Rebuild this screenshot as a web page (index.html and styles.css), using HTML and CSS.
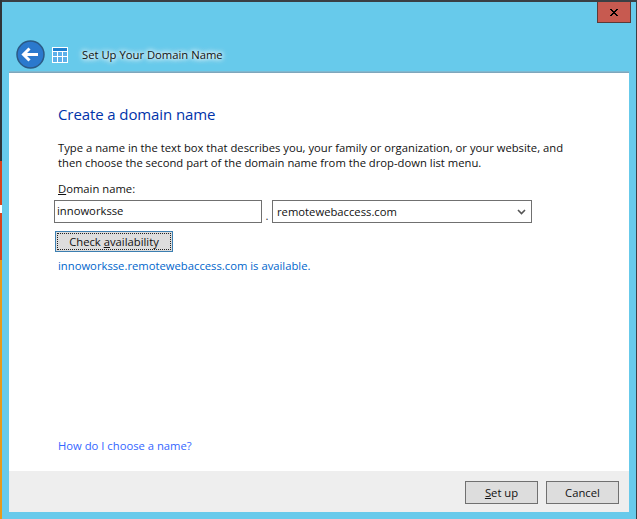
FILE: index.html
```html
<!DOCTYPE html>
<html lang="en">
<head>
<meta charset="utf-8">
<title>Set Up Your Domain Name</title>
<link rel="stylesheet" href="styles.css">
</head>
<body>
<div class="window">
  <div class="edge-left"></div>
  <div class="frame">
    <div class="titlebar">
      <button class="close" aria-label="Close"><svg width="10" height="9" viewBox="0 0 10 9"><path d="M1 1h2v1h1v1h2V2h1V1h2v1H8v1H7v1H6v1h1v1h1v1h1v1H7V7H6V6H4v1H3v1H1V7h1V6h1V5h1V4H3V3H2V2H1z" fill="#000"/></svg></button>
    </div>
    <div class="navbar">
      <svg class="back" width="30" height="30" viewBox="0 0 30 30"><circle cx="14.5" cy="14.5" r="13.5" fill="#2b79cd" stroke="#2b5a85" stroke-width="1.5"/><path d="M7 14.5h15M13.5 8.5l-6 6 6 6" fill="none" stroke="#fff" stroke-width="3"/></svg>
      <svg class="app-icon" width="16" height="16" viewBox="0 0 16 16"><rect x=".5" y=".5" width="15" height="15" fill="#fff" stroke="#fff"/><rect x="1" y="1" width="14" height="3" fill="#1f7fd0"/><path d="M1 5h14v10H1z" fill="#5eb0ea"/><path d="M5.5 5v10M10.5 5v10M1 9.5h14" stroke="#fff" fill="none"/></svg>
      <span class="nav-title">Set Up Your Domain Name</span>
    </div>
    <main class="panel">
      <div class="content">
        <h1 class="heading">Create a domain name</h1>
        <p class="intro">Type a name in the text box that describes you, your family or organization, or your website, and<br>then choose the second part of the domain name from the drop-down list menu.</p>
        <label class="field-label"><u>D</u>omain name:</label>
        <div class="field-row">
          <div class="textbox">innoworksse</div>
          <span class="dot">.</span>
          <div class="select"><span>remotewebaccess.com</span><svg width="9" height="6" viewBox="0 0 9 6"><path d="M1 1l3.5 3.5L8 1" fill="none" stroke="#555" stroke-width="1.6"/></svg></div>
        </div>
        <button class="btn check"><span class="focus-ring"><span>Check <u>a</u>vailability</span></span></button>
        <p class="status">innoworksse.remotewebaccess.com is available.</p>
        <a class="help">How do I choose a name?</a>
      </div>
      <div class="footer">
        <button class="btn action"><u>S</u>et up</button>
        <button class="btn action">Cancel</button>
      </div>
    </main>
  </div>
</div>
</body>
</html>
```
FILE: styles.css
```css
* { box-sizing: border-box; }
html, body { margin: 0; height: 100%; }
body { font-family: "Open Sans", "Noto Sans", sans-serif; font-size: 11.25px; color: #111; background: #67caeb; overflow: hidden; }
.window { width: 637px; height: 519px; display: flex; }
.edge-left { width: 2px; background: linear-gradient(#2f3438 0 161px, #d8431c 161px 205px, #fff 205px 213px, #d8431c 213px 260px, #e89a1a 260px 100%); }
.frame { flex: 1; display: flex; flex-direction: column; background: #67caeb; border-top: 2px solid #3a3f44; border-right: 1px solid #3a3f44; }
.titlebar { height: 37px; display: flex; justify-content: flex-end; padding-right: 5px; flex: none; }
.close { width: 34px; height: 21px; margin: 0; padding: 0; background: #c75a50; border: 1px solid #5b3a38; border-top: 0; display: flex; align-items: center; justify-content: center; }
.navbar { height: 33px; display: flex; align-items: center; flex: none; padding: 0 0 2px 14px; }
.back { flex: none; }
.app-icon { flex: none; margin-left: 6px; }
.nav-title { margin-left: 14px; text-shadow: 0 0 6px #fff, 0 0 6px #fff, 0 0 4px #fff; color: #111; }
.panel { margin: 0 7px 7px 7px; flex: 1; background: #fff; border-top: 1px solid #7fa6bc; display: flex; flex-direction: column; box-shadow: 0 -1px 0 #7fb8d0; }
.content { flex: 1; padding: 0 0 0 49px; display: flex; flex-direction: column; align-items: flex-start; }
.heading { margin: 31px 0 0; font-size: 15px; font-weight: 400; line-height: 20px; color: #0033aa; letter-spacing: -0.1px; }
.intro { margin: 16px 0 0 0; line-height: 15px; }
.field-label { margin-top: 11px; line-height: 15px; }
.field-row { display: flex; align-items: flex-end; margin: 4px 0 0 -4px; }
.textbox { width: 208px; height: 23px; border: 1px solid #707070; padding: 0 2px; line-height: 20px; }
.dot { width: 10px; text-align: center; line-height: 14px; color: #333; }
.select { width: 260px; height: 23px; border: 1px solid #707070; padding: 0 5px 0 4px; display: flex; justify-content: space-between; align-items: center; }
.btn { font: inherit; color: #111; background: #dddddd; border: 1px solid #707070; padding: 0; margin: 0; }
.check { width: 118px; height: 21px; margin: 8px 0 0 -3px; border-color: #3c7fb1; padding: 1px; }
.focus-ring { display: flex; height: 100%; align-items: center; justify-content: center; border: 1px dotted #222; }
.status { margin: 6px 0 0; line-height: 15px; color: #0066cc; }
.help { margin-top: auto; margin-bottom: 18px; line-height: 15px; color: #3366ff; }
.footer { height: 41px; background: #eeeeee; display: flex; justify-content: flex-end; align-items: flex-start; gap: 8px; padding: 10px 10px 0 0; flex: none; }
.action { width: 73px; height: 23px; }
```
